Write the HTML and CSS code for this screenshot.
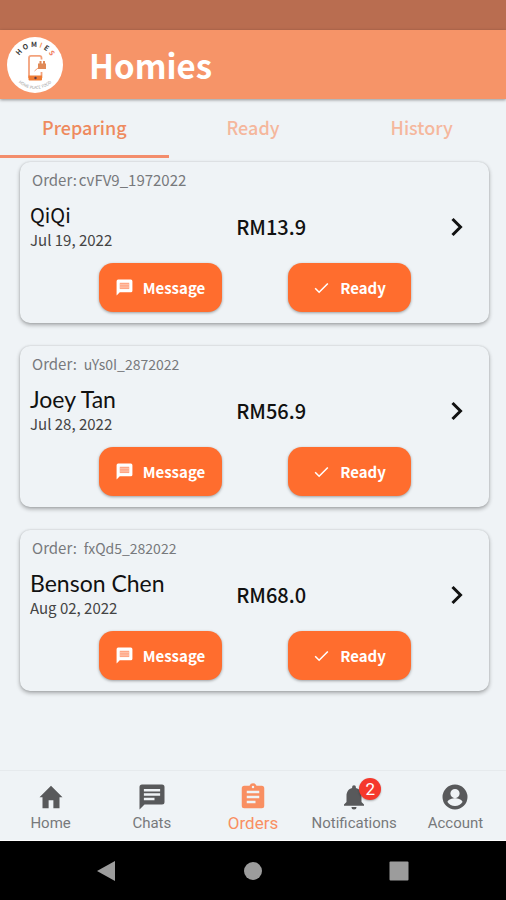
FILE: index.html
```html
<!DOCTYPE html>
<html lang="en">
<head>
  <meta charset="UTF-8" />
  <meta name="viewport" content="width=device-width, initial-scale=1.0"/>
  <title>Homies</title>
  <link rel="stylesheet" href="styles.css">
</head>
<body>

  <!-- Shared icons -->
  <svg class="sprite" aria-hidden="true">
    <symbol id="icon-message" viewBox="0 0 24 24">
      <path fill="#fff" d="M4 2h16a2 2 0 0 1 2 2v12a2 2 0 0 1-2 2H6l-4 4V4a2 2 0 0 1 2-2z"/>
      <path fill="#ffa583" d="M6 6h12v8H6z"/>
      <path stroke="#ffd0bd" stroke-width="1" d="M6 8.500h12M6 11.500h12"/>
    </symbol>
    <symbol id="icon-check" viewBox="0 0 24 24">
      <path fill="none" stroke="#fff" stroke-width="2" d="M4 13l5 5L20 7"/>
    </symbol>
    <symbol id="icon-chevron" viewBox="0 0 24 24">
      <path fill="none" stroke="#111" stroke-width="3" d="M7.500 4l8 8-8 8"/>
    </symbol>
  </svg>

  <div class="status-bar"></div>

  <!-- Header -->
  <header class="header">
    <svg class="logo" viewBox="0 0 56 56" role="img" aria-label="Homies logo">
      <circle cx="28" cy="28" r="28" fill="#fff"/>
      <path id="arc-top" fill="none" d="M10 28A18 18 0 0 1 46 28"/>
      <path id="arc-bottom" fill="none" d="M4 28A24 24 0 0 0 52 28"/>
      <text class="logo-name"><textPath href="#arc-top" startOffset="52%">HOM<tspan fill="#f59a62">I</tspan>E<tspan fill="#f0795a">S</tspan></textPath></text>
      <text class="logo-tag"><textPath href="#arc-bottom" startOffset="50%">HOME PLACE FOOD</textPath></text>
      <path fill="none" stroke="#f3a27c" stroke-width="1.800" d="M34.500 22.500v-1.600a2 2 0 0 0-2-2H24a2 2 0 0 0-2 2V40h12.500v-5"/>
      <path fill="#ef7d35" d="M21.500 38.500h13.500v4a1 1 0 0 1-1 1H22.500a1 1 0 0 1-1-1z"/>
      <circle cx="28.500" cy="41" r="1.200" fill="#5c3a4a"/>
      <path fill="#e08a58" d="M31 26.500h1.500V24h2v2.500H36V24h2v2.500h1V32h-8z"/>
      <path fill="none" stroke="#f3a27c" d="M31 31l-3.500 3"/>
    </svg>
    <h1 class="header-title">Homies</h1>
  </header>

  <!-- Order tabs -->
  <nav class="tabs">
    <button class="tab active">Preparing</button>
    <button class="tab">Ready</button>
    <button class="tab">History</button>
  </nav>

  <!-- Orders -->
  <main class="orders">
    <article class="card">
      <div class="order-id"><span>Order:</span><span class="code large">cvFV9_1972022</span></div>
      <div class="summary">
        <div>
          <h2 class="name plain">QiQi</h2>
          <div class="date">Jul 19, 2022</div>
        </div>
        <div class="price">RM13.9</div>
        <button class="details" aria-label="Order details"><svg><use href="#icon-chevron"/></svg></button>
      </div>
      <div class="actions">
        <button class="btn"><svg><use href="#icon-message"/></svg>Message</button>
        <button class="btn"><svg><use href="#icon-check"/></svg>Ready</button>
      </div>
    </article>

    <article class="card">
      <div class="order-id"><span>Order:</span><span class="code">uYs0I_2872022</span></div>
      <div class="summary">
        <div>
          <h2 class="name">Joey Tan</h2>
          <div class="date">Jul 28, 2022</div>
        </div>
        <div class="price">RM56.9</div>
        <button class="details" aria-label="Order details"><svg><use href="#icon-chevron"/></svg></button>
      </div>
      <div class="actions">
        <button class="btn"><svg><use href="#icon-message"/></svg>Message</button>
        <button class="btn"><svg><use href="#icon-check"/></svg>Ready</button>
      </div>
    </article>

    <article class="card">
      <div class="order-id"><span>Order:</span><span class="code">fxQd5_282022</span></div>
      <div class="summary">
        <div>
          <h2 class="name">Benson Chen</h2>
          <div class="date">Aug 02, 2022</div>
        </div>
        <div class="price">RM68.0</div>
        <button class="details" aria-label="Order details"><svg><use href="#icon-chevron"/></svg></button>
      </div>
      <div class="actions">
        <button class="btn"><svg><use href="#icon-message"/></svg>Message</button>
        <button class="btn"><svg><use href="#icon-check"/></svg>Ready</button>
      </div>
    </article>
  </main>

  <!-- Bottom menu -->
  <nav class="menu">
    <a class="menu-item" href="#home">
      <svg viewBox="0 0 24 24"><path d="M12 3L2.800 12.200h2.400V21h4.900v-6.500h3.800V21h4.900v-8.800h2.400z"/></svg>
      Home
    </a>
    <a class="menu-item" href="#chats">
      <svg viewBox="0 0 24 24"><path fill-rule="evenodd" d="M4 2h16a2 2 0 0 1 2 2v12a2 2 0 0 1-2 2H6l-4 4V4a2 2 0 0 1 2-2zM5.500 5.500v2h13v-2zm0 3.500v2h13V9zm0 3.500v2h8.500v-2z"/></svg>
      Chats
    </a>
    <a class="menu-item active" href="#orders">
      <svg viewBox="0 0 24 24"><path fill-rule="evenodd" d="M19 3h-4.200a3 3 0 0 0-5.600 0H5a2 2 0 0 0-2 2v14a2 2 0 0 0 2 2h14a2 2 0 0 0 2-2V5a2 2 0 0 0-2-2zm-7 0a1 1 0 1 1 0 2 1 1 0 0 1 0-2zm2 14H7v-2h7zm3-4H7v-2h10zm0-4H7V7h10z"/></svg>
      Orders
    </a>
    <a class="menu-item" href="#notifications">
      <span class="bell">
        <svg viewBox="0 0 24 24"><path d="M12 22a2 2 0 0 0 2-2h-4a2 2 0 0 0 2 2zm6-6v-5c0-3.100-1.600-5.600-4.500-6.300V4a1.500 1.500 0 0 0-3 0v.700C7.600 5.400 6 7.900 6 11v5l-2 2v1h16v-1z"/></svg>
        <span class="badge">2</span>
      </span>
      Notifications
    </a>
    <a class="menu-item" href="#account">
      <svg viewBox="0 0 24 24"><path fill-rule="evenodd" d="M12 2a10 10 0 1 0 0 20 10 10 0 0 0 0-20zm0 3.500a3.700 3.700 0 1 1 0 7.400 3.700 3.700 0 0 1 0-7.400zm0 13.700a7.200 7.200 0 0 1-6-3.200c0-2 4-3.100 6-3.100s6 1.100 6 3.100a7.200 7.200 0 0 1-6 3.200z"/></svg>
      Account
    </a>
  </nav>

  <!-- Android buttons -->
  <div class="system-bar">
    <button aria-label="Back"><svg viewBox="0 0 24 24"><path d="M2 12L20 2v20z"/></svg></button>
    <button aria-label="Home"><svg viewBox="0 0 24 24"><circle cx="12" cy="12" r="9"/></svg></button>
    <button aria-label="Recent apps"><svg viewBox="0 0 24 24"><rect x="2.500" y="2.500" width="19" height="19" rx="1"/></svg></button>
  </div>

</body>
</html>
```
FILE: styles.css
```css
:root {
  --bg-color: #eff3f6;
  --header-color: #f69468;
  --btn-color: #ff6d2e;
  --icon-color: #58595b;
}

* {
  box-sizing: border-box;
}

body {
  margin: 0;
  min-height: 100vh;
  display: flex;
  flex-direction: column;
  background-color: var(--bg-color);
  font-family: "Noto Sans CJK SC", "Noto Sans", sans-serif;
  color: #111;
}

button {
  font-family: inherit;
  border: none;
  padding: 0;
  background: transparent;
  cursor: pointer;
}

svg {
  display: block;
}

.sprite {
  position: absolute;
  width: 0;
  height: 0;
}

.status-bar {
  height: 30px;
  background-color: #b96d50;
}

.header {
  height: 69px;
  padding: 0 7px;
  display: flex;
  align-items: center;
  gap: 26px;
  background-color: var(--header-color);
  color: white;
  box-shadow: 0 1px 3px rgba(0,0,0,0.4);
}

.logo {
  width: 56px;
  height: 56px;
}

.logo-name {
  font-size: 7px;
  font-weight: bold;
  fill: #3a3a3a;
  letter-spacing: 2px;
  text-anchor: middle;
}

.logo-tag {
  font-size: 4px;
  fill: #999;
  text-anchor: middle;
}

.header-title {
  margin: 0;
  font-size: 33px;
  line-height: 48px;
  font-weight: bold;
}

.tabs {
  display: flex;
  height: 59px;
}

.tab {
  flex: 1;
  border-bottom: 3px solid transparent;
  font-size: 18px;
  font-weight: 500;
  color: #f5b79d;
}

.tab.active {
  color: #ee8a5e;
  border-bottom-color: #f38d6c;
}

.orders {
  flex: 1;
  padding: 4px 17px 16px 20px;
  display: flex;
  flex-direction: column;
  gap: 23px;
}

.card {
  padding: 8px 0 11px;
  border-radius: 10px;
  background-color: var(--bg-color);
  box-shadow: 0 2px 4px rgba(0,0,0,0.32), 0 0 2px rgba(0,0,0,0.14);
}

.order-id {
  display: flex;
  gap: 2px;
  padding-left: 12px;
  font-size: 15px;
  line-height: 20px;
  color: #77797c;
}

.code {
  padding-left: 5px;
  font-size: 14px;
}

.code.large {
  padding-left: 0;
  font-size: 15px;
}

.summary {
  display: grid;
  grid-template-columns: 44% 1fr auto;
  align-items: center;
  padding: 12px 20px 12px 10px;
}

.name {
  margin: 0;
  font-family: Lato, sans-serif;
  font-size: 23px;
  line-height: 26px;
  font-weight: 400;
}

.name.plain {
  font-family: inherit;
  font-size: 20px;
}

.date {
  font-size: 15px;
  line-height: 23px;
  color: #444;
}

.price {
  padding-left: 13px;
  font-size: 20px;
  line-height: 26px;
  font-weight: 500;
}

.details svg {
  width: 24px;
  height: 24px;
}

.actions {
  display: flex;
  justify-content: center;
  gap: 66px;
}

.btn {
  display: flex;
  align-items: center;
  justify-content: center;
  gap: 9px;
  width: 123px;
  height: 49px;
  border-radius: 14px;
  background-color: var(--btn-color);
  color: white;
  font-size: 15px;
  font-weight: bold;
  box-shadow: 0 1px 3px rgba(0,0,0,0.35);
}

.btn svg {
  width: 19px;
  height: 19px;
}

.menu {
  display: flex;
  height: 71px;
  border-top: 1px solid #e6eaed;
  border-bottom: 1px solid #fff;
}

.menu-item {
  flex: 1;
  display: flex;
  flex-direction: column;
  align-items: center;
  padding-top: 11px;
  font-family: Roboto, sans-serif;
  font-size: 15px;
  line-height: 22px;
  color: #77797b;
  text-decoration: none;
}

.menu-item svg {
  width: 30px;
  height: 30px;
  fill: var(--icon-color);
}

.menu-item.active {
  font-size: 17px;
  color: #f98f62;
}

.menu-item.active svg {
  fill: #f98f62;
}

.bell {
  position: relative;
}

.badge {
  position: absolute;
  top: -4px;
  right: -12px;
  width: 22px;
  height: 22px;
  border-radius: 50%;
  background-color: #f5382c;
  color: white;
  font-size: 17px;
  line-height: 22px;
  text-align: center;
  box-shadow: 0 1px 2px rgba(0,0,0,0.3);
}

.system-bar {
  display: flex;
  align-items: center;
  justify-content: center;
  gap: 122px;
  height: 59px;
  background-color: #000;
}

.system-bar svg {
  width: 24px;
  height: 24px;
  fill: #9c9c9c;
}
```
